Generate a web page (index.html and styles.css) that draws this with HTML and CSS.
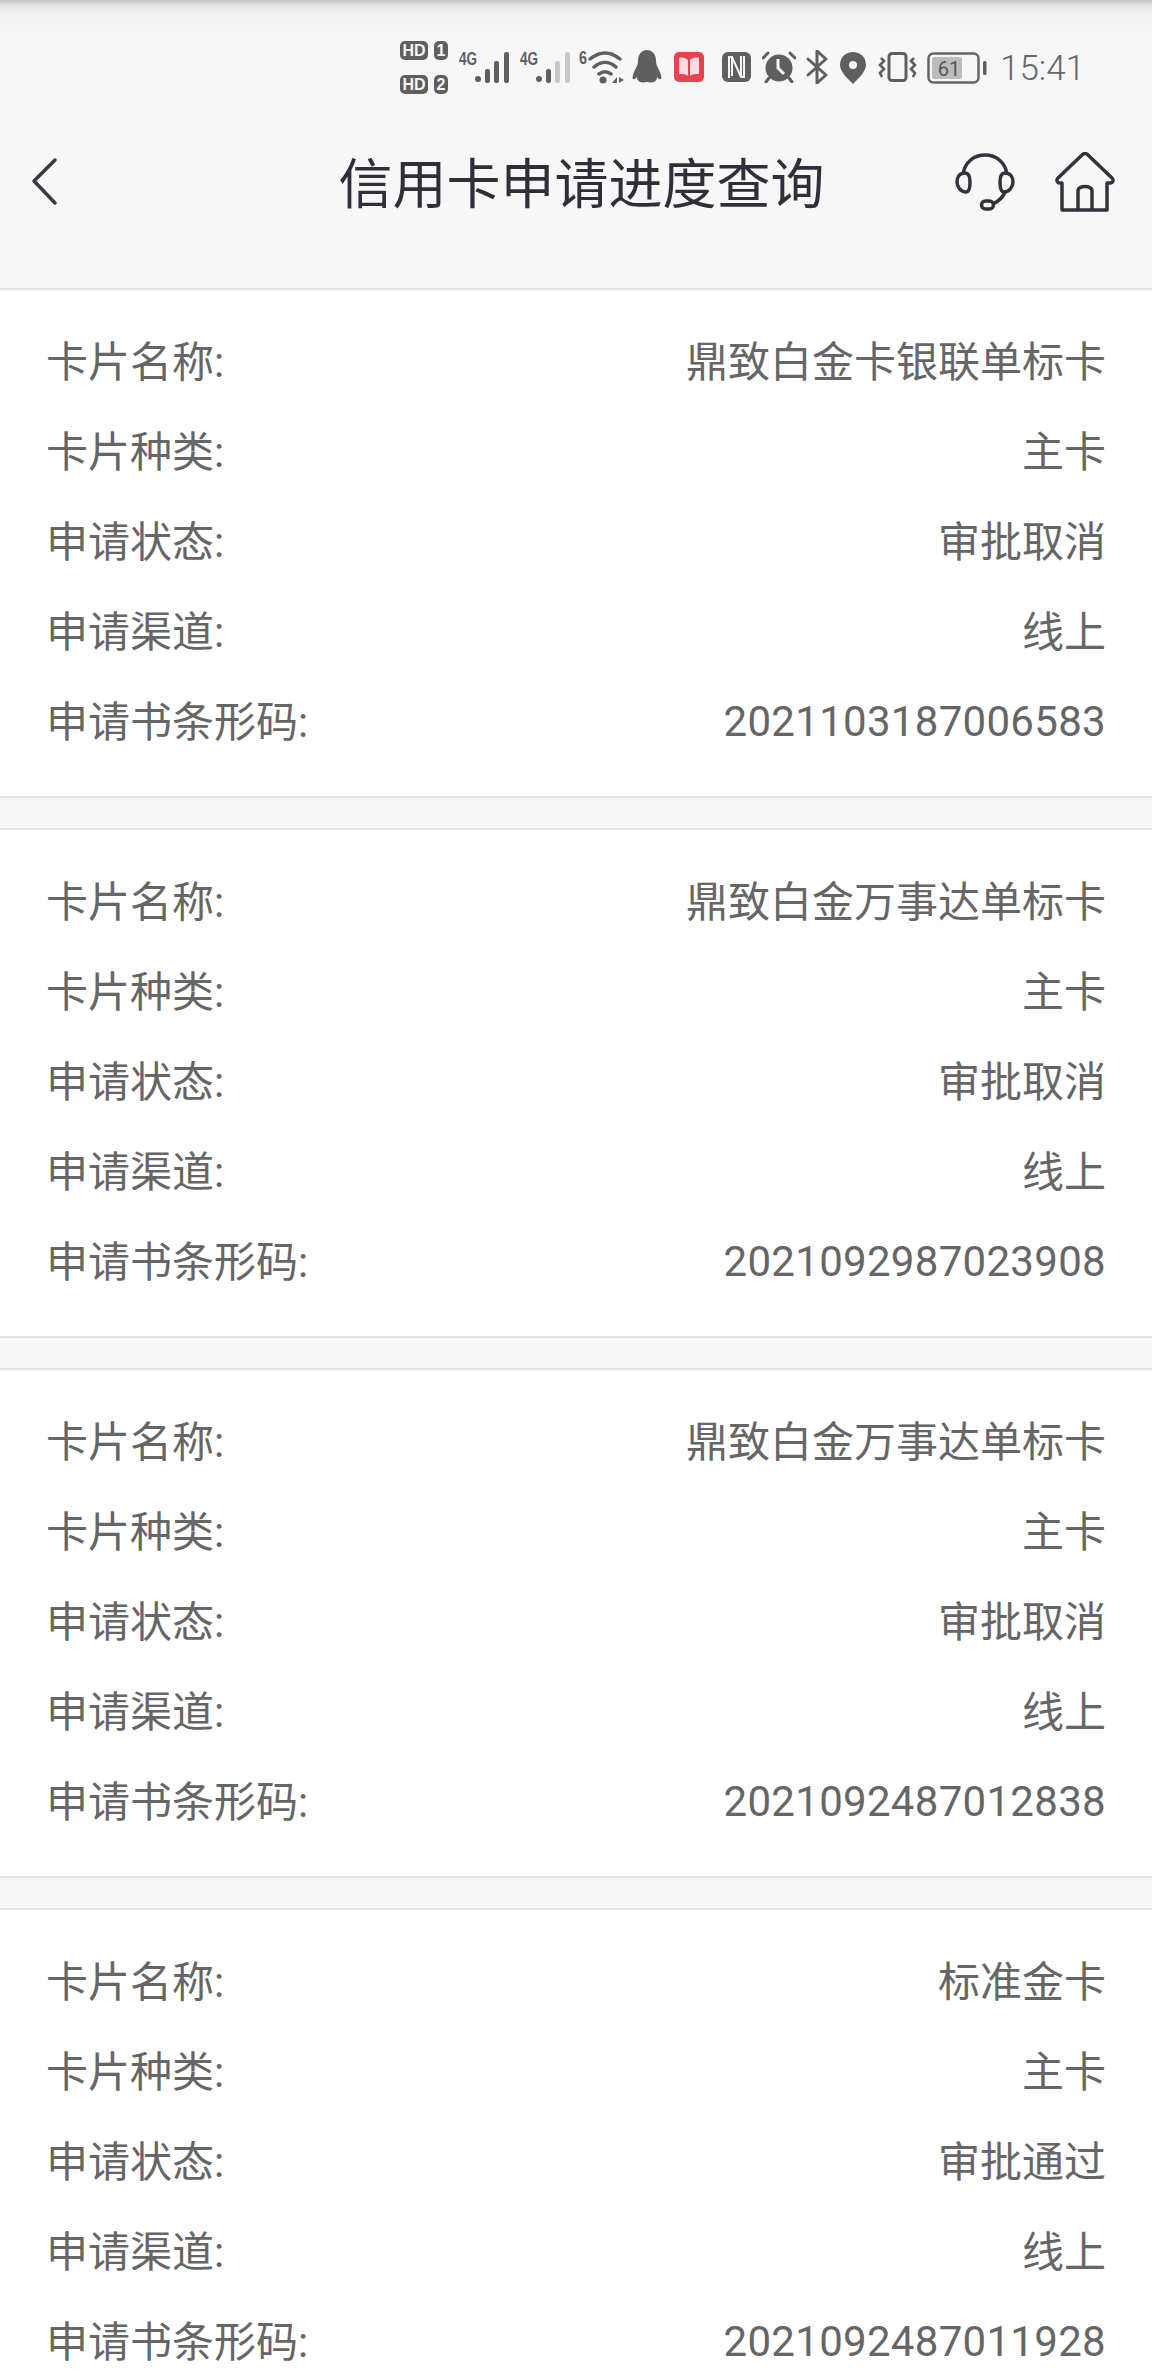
FILE: index.html
```html
<!DOCTYPE html>
<html lang="zh-CN">

<head>
  <meta charset="UTF-8" />
  <meta name="viewport" content="width=device-width, initial-scale=1.0" />
  <title>信用卡申请进度查询</title>
  <link rel="stylesheet" href="styles.css">
</head>

<body>
  <div class="header">
    <div class="status-bar">
      <svg class="ic" width="48" height="56" viewBox="0 0 48 56">
        <rect x="0" y="1" width="28" height="19" rx="5" fill="#5f5f5f" />
        <rect x="34" y="1" width="14" height="19" rx="5" fill="#5f5f5f" />
        <rect x="0" y="35" width="28" height="19" rx="5" fill="#5f5f5f" />
        <rect x="34" y="35" width="14" height="19" rx="5" fill="#5f5f5f" />
        <text x="14" y="16" class="ic-txt-w" text-anchor="middle">HD</text>
        <text x="41" y="16" class="ic-txt-w" text-anchor="middle">1</text>
        <text x="14" y="50" class="ic-txt-w" text-anchor="middle">HD</text>
        <text x="41" y="50" class="ic-txt-w" text-anchor="middle">2</text>
      </svg>
      <svg class="ic sig" width="51" height="34" viewBox="0 0 51 34">
        <text x="0" y="15" class="ic-txt" textLength="18" lengthAdjust="spacingAndGlyphs">4G</text>
        <circle cx="19" cy="29" r="3" fill="#5f5f5f" />
        <rect x="26" y="19" width="5" height="14" rx="2" fill="#5f5f5f" />
        <rect x="35" y="11" width="5" height="22" rx="2" fill="#5f5f5f" />
        <rect x="45" y="2" width="5" height="31" rx="2" fill="#5f5f5f" />
      </svg>
      <svg class="ic sig" width="51" height="34" viewBox="0 0 51 34">
        <text x="0" y="15" class="ic-txt" textLength="18" lengthAdjust="spacingAndGlyphs">4G</text>
        <circle cx="19" cy="29" r="3" fill="#5f5f5f" />
        <rect x="26" y="19" width="5" height="14" rx="2" fill="#5f5f5f" />
        <rect x="35" y="11" width="5" height="22" rx="2" fill="#c8c8c8" />
        <rect x="45" y="2" width="5" height="31" rx="2" fill="#c8c8c8" />
      </svg>
      <svg class="ic wifi" width="46" height="34" viewBox="0 0 46 34">
        <text x="0" y="14" class="ic-txt" textLength="8" lengthAdjust="spacingAndGlyphs">6</text>
        <path d="M11 9C21 1 31 1 41 9M15 17C22 11 30 11 37 17M20 24C24 21 28 21 32 24" fill="none" stroke="#5f5f5f" stroke-width="3.500" stroke-linecap="round" />
        <circle cx="24" cy="30" r="3.500" fill="#5f5f5f" />
        <path d="M38 33V27L33 33ZM40 27V33L45 30Z" fill="#5f5f5f" />
      </svg>
      <svg class="ic qq" width="30" height="34" viewBox="0 0 30 34">
        <path d="M15 0C9 0 6 5 6 11C6 14 5 16 3 20C1 24 0 28 1 29C2 30 4 28 5 27C5 29 6 31 8 32C11 33 13 32 15 32C17 32 19 33 22 32C24 31 25 29 25 27C26 28 28 30 29 29C30 28 29 24 27 20C25 16 24 14 24 11C24 5 21 0 15 0Z" fill="#5f5f5f" />
      </svg>
      <svg class="ic book" width="30" height="30" viewBox="0 0 30 30">
        <rect width="30" height="30" rx="5" fill="#e4434f" />
        <path d="M5 6C8 5 12 6 14 8V24C12 22 8 22 5 22ZM25 6C22 5 18 6 16 8V24C18 22 22 22 25 22Z" fill="#fbdde0" />
      </svg>
      <svg class="ic nfc" width="29" height="30" viewBox="0 0 29 30">
        <rect width="29" height="30" rx="6" fill="#5f5f5f" />
        <path d="M7 26V5H10L19 25V4M10 5V24M19 25H22V4" fill="none" stroke="#f7f7f7" stroke-width="2" />
      </svg>
      <svg class="ic alarm" width="34" height="32" viewBox="0 0 34 32">
        <circle cx="17" cy="17" r="13.500" fill="#5f5f5f" />
        <path d="M1 7L6 2M33 7L28 2M7 27L4 31M27 27L30 31" stroke="#5f5f5f" stroke-width="3" stroke-linecap="round" />
        <path d="M16 8V17L22 23" fill="none" stroke="#f7f7f7" stroke-width="3" />
      </svg>
      <svg class="ic bt" width="24" height="34" viewBox="0 0 24 34">
        <path d="M2 25L20 9L11 1V33L20 25L2 9" fill="none" stroke="#5f5f5f" stroke-width="3" stroke-linejoin="round" stroke-linecap="round" />
      </svg>
      <svg class="ic pin" width="26" height="32" viewBox="0 0 26 32">
        <path fill-rule="evenodd" d="M13 0C6 0 0 5 0 13C0 20 9 28 13 32C17 28 26 20 26 13C26 5 20 0 13 0ZM13 9A4 4 0 1 1 13 17A4 4 0 1 1 13 9Z" fill="#5f5f5f" />
      </svg>
      <svg class="ic vib" width="40" height="30" viewBox="0 0 40 30">
        <rect x="11" y="1.500" width="17" height="27" rx="3" fill="none" stroke="#5f5f5f" stroke-width="3" />
        <path d="M3 6L6 9L2 13L6 17L2 21L4 25M36 6L33 9L37 13L33 17L37 21L35 25" fill="none" stroke="#5f5f5f" stroke-width="2.600" />
      </svg>
      <svg class="ic bat" width="60" height="32" viewBox="0 0 60 32">
        <rect x="1.500" y="1.500" width="50" height="29" rx="5" fill="none" stroke="#666" stroke-width="2.500" />
        <rect x="5" y="5" width="30" height="22" rx="2" fill="#bcbcbc" />
        <rect x="56" y="9" width="3.500" height="14" rx="1.500" fill="#5f5f5f" />
        <text x="22" y="24" class="bat-txt" text-anchor="middle">61</text>
      </svg>
      <span class="time">15:41</span>
    </div>
    <div class="nav-bar">
      <svg class="back" width="28" height="50" viewBox="0 0 28 50">
        <path d="M25 3L4 24L25 46" fill="none" stroke="#3a3a44" stroke-width="3.500" stroke-linecap="round" stroke-linejoin="round" />
      </svg>
      <h1 class="nav-title">信用卡申请进度查询</h1>
      <svg class="nav-ic" width="60" height="60" viewBox="0 0 60 60">
        <path d="M8 22C10 10 19 3 30 3C41 3 50 10 52 22" fill="none" stroke="#33333d" stroke-width="3.500" />
        <path d="M10 21C4 21 2 26 2 30C2 35 6 40 11 40C14 40 15 37 15 30C15 24 13 21 10 21ZM50 21C56 21 58 26 58 30C58 35 54 40 49 40C46 40 45 37 45 30C45 24 47 21 50 21Z" fill="none" stroke="#33333d" stroke-width="3.500" />
        <path d="M50 40C48 45 44 49 38 52" fill="none" stroke="#33333d" stroke-width="3.500" />
        <rect x="26.500" y="49" width="12" height="8" rx="4" fill="none" stroke="#33333d" stroke-width="3.500" />
      </svg>
      <svg class="nav-ic" width="60" height="60" viewBox="0 0 60 60">
        <path d="M7 58V31H5C2 31 1 28 3 26L27 3C29 1 31 1 33 3L57 26C59 28 58 31 55 31H52V58ZM7 58H23V39C23 33 37 33 37 39V58H52" fill="none" stroke="#33333d" stroke-width="3.500" stroke-linejoin="round" />
      </svg>
    </div>
  </div>

  <div class="list">
    <ul class="card">
      <li><span>卡片名称:</span><span>鼎致白金卡银联单标卡</span></li>
      <li><span>卡片种类:</span><span>主卡</span></li>
      <li><span>申请状态:</span><span>审批取消</span></li>
      <li><span>申请渠道:</span><span>线上</span></li>
      <li><span>申请书条形码:</span><span class="num">2021103187006583</span></li>
    </ul>
    <ul class="card">
      <li><span>卡片名称:</span><span>鼎致白金万事达单标卡</span></li>
      <li><span>卡片种类:</span><span>主卡</span></li>
      <li><span>申请状态:</span><span>审批取消</span></li>
      <li><span>申请渠道:</span><span>线上</span></li>
      <li><span>申请书条形码:</span><span class="num">2021092987023908</span></li>
    </ul>
    <ul class="card">
      <li><span>卡片名称:</span><span>鼎致白金万事达单标卡</span></li>
      <li><span>卡片种类:</span><span>主卡</span></li>
      <li><span>申请状态:</span><span>审批取消</span></li>
      <li><span>申请渠道:</span><span>线上</span></li>
      <li><span>申请书条形码:</span><span class="num">2021092487012838</span></li>
    </ul>
    <ul class="card">
      <li><span>卡片名称:</span><span>标准金卡</span></li>
      <li><span>卡片种类:</span><span>主卡</span></li>
      <li><span>申请状态:</span><span>审批通过</span></li>
      <li><span>申请渠道:</span><span>线上</span></li>
      <li><span>申请书条形码:</span><span class="num">2021092487011928</span></li>
    </ul>
  </div>
</body>

</html>
```

FILE: styles.css
```css
html, body, div, ul, li, h1 {
  padding: 0;
  margin: 0;
}
html, body {
  height: 2376px;
  overflow: hidden;
}
ul {
  list-style: none;
}
body {
  background-color: #f7f7f7;
  font-family: Roboto, "Noto Sans CJK SC", sans-serif;
  color: #666;
}

/* header */
.header {
  height: 288px;
  background: linear-gradient(#c4c4c4 0, #e6e6e6 6px, #f1f1f1 14px, #f7f7f7 40px);
  border-bottom: 2px solid #e2e2e2;
}
.status-bar {
  height: 40px;
  padding: 40px 72px 0 400px;
  display: flex;
  align-items: flex-start;
}
.ic {
  display: block;
  flex: none;
}
.ic-txt-w {
  font-family: "Liberation Sans", sans-serif;
  font-size: 16px;
  font-weight: bold;
  fill: #f7f7f7;
}
.ic-txt {
  font-family: "Liberation Sans", sans-serif;
  font-size: 18px;
  font-weight: bold;
  fill: #5f5f5f;
}
.bat-txt {
  font-family: Roboto, sans-serif;
  font-size: 20px;
  fill: #555;
}
.sig { margin: 10px 0 0 11px; }
.sig + .sig { margin-left: 10px; }
.wifi { margin: 10px 0 0 8px; }
.qq { margin: 10px 0 0 7px; }
.book { margin: 12px 0 0 12px; }
.nfc { margin: 12px 0 0 18px; }
.alarm { margin: 11px 0 0 11px; }
.bt { margin: 10px 0 0 10px; }
.pin { margin: 12px 0 0 10px; }
.vib { margin: 12px 0 0 12px; }
.bat { margin: 12px 0 0 9px; }
.time {
  margin: 8px 0 0 13px;
  font-size: 35px;
  line-height: 42px;
  font-weight: 300;
  color: #666;
}

.nav-bar {
  height: 110px;
  margin-top: 47px;
  padding: 0 37px 0 30px;
  display: flex;
  align-items: center;
}
.back {
  flex: none;
}
.nav-title {
  flex: 1;
  font-size: 54px;
  line-height: 60px;
  font-weight: 400;
  text-align: center;
  color: #2f2f3a;
  padding-left: 150px;
  margin-top: 8px;
}
.nav-ic {
  flex: none;
}
.nav-ic + .nav-ic {
  margin-left: 40px;
}

/* card list */
.card {
  background-color: #fff;
  height: 483px;
  padding: 23px 46px 0;
  border-bottom: 2px solid #e2e2e2;
  margin-bottom: 30px;
}
.card + .card {
  border-top: 2px solid #e2e2e2;
}
.card li {
  height: 90px;
  display: flex;
  justify-content: space-between;
  align-items: center;
  font-size: 42px;
}
.card .num {
  margin-top: 6px;
  letter-spacing: 0.3px;
}
```
